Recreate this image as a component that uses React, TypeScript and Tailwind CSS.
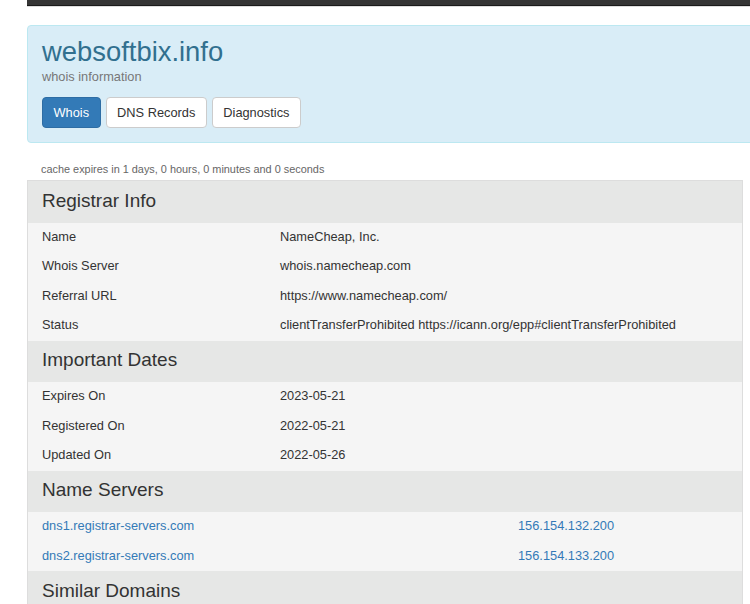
import React from "react";

type Row = { label: string; value: string };

const registrar: Row[] = [
  { label: "Name", value: "NameCheap, Inc." },
  { label: "Whois Server", value: "whois.namecheap.com" },
  { label: "Referral URL", value: "https://www.namecheap.com/" },
  {
    label: "Status",
    value: "clientTransferProhibited https://icann.org/epp#clientTransferProhibited",
  },
];

const dates: Row[] = [
  { label: "Expires On", value: "2023-05-21" },
  { label: "Registered On", value: "2022-05-21" },
  { label: "Updated On", value: "2022-05-26" },
];

const nameServers = [
  { host: "dns1.registrar-servers.com", ip: "156.154.132.200" },
  { host: "dns2.registrar-servers.com", ip: "156.154.133.200" },
];

function SectionHeader({ title }: { title: string }) {
  return (
    <div className="h-[41.5px] flex items-center px-[14px] pb-[2px] bg-[#e6e7e6] text-[19px] text-[#333]">
      {title}
    </div>
  );
}

function InfoRows({ rows }: { rows: Row[] }) {
  return (
    <div className="bg-[#f5f5f5]">
      {rows.map((r) => (
        <div key={r.label} className="grid grid-cols-3 h-[29.5px] pb-[2px] items-center text-[12.8px] text-[#333]">
          <div className="px-[14px]">{r.label}</div>
          <div className="col-span-2 px-[14px] whitespace-nowrap">{r.value}</div>
        </div>
      ))}
    </div>
  );
}

export default function App() {
  return (
    <div className="w-[750px] h-[604px] overflow-hidden bg-white pl-[27px] font-['Liberation_Sans',Arial,sans-serif]">
      {/* top bar */}
      <div className="h-[6px] bg-[#353535] border-b border-[#1a1a1a]" />
      <div className="h-px bg-[#ddd]" />

      {/* jumbotron */}
      <div className="mt-[18px] w-[740px] bg-[#d9edf7] border border-[#bce8f1] rounded-[4px] pt-[11px] pb-[14px] px-[14px]">
        <h1 className="text-[27.4px] leading-[30px] text-[#31708f]">websoftbix.info</h1>
        <p className="text-[12.8px] leading-[18px] text-[#777] mt-[1px]">whois information</p>
        <div className="flex gap-[5px] mt-[11px]">
          <button className="h-[31px] px-[10.5px] rounded-[4px] bg-[#337ab7] border border-[#2e6da4] text-white text-[12.8px]">
            Whois
          </button>
          <button className="h-[31px] px-[10.5px] rounded-[4px] bg-white border border-[#ccc] text-[#333] text-[12.8px]">
            DNS Records
          </button>
          <button className="h-[31px] px-[10.5px] rounded-[4px] bg-white border border-[#ccc] text-[#333] text-[12.8px]">
            Diagnostics
          </button>
        </div>
      </div>

      <div className="mt-[19px] pl-[14px] text-[10.9px] leading-[14px] text-[#666]">
        cache expires in 1 days, 0 hours, 0 minutes and 0 seconds
      </div>

      {/* whois table */}
      <div className="mt-[4px] w-[716px] border border-[#ddd] border-b-0">
        <SectionHeader title="Registrar Info" />
        <InfoRows rows={registrar} />
        <SectionHeader title="Important Dates" />
        <InfoRows rows={dates} />
        <SectionHeader title="Name Servers" />
        <div className="bg-[#f5f5f5]">
          {nameServers.map((ns) => (
            <div key={ns.host} className="grid grid-cols-3 h-[29.5px] pb-[2px] items-center text-[12.8px]">
              <a href="#" className="col-span-2 px-[14px] text-[#337ab7]">
                {ns.host}
              </a>
              <a href="#" className="px-[14px] text-[#337ab7]">
                {ns.ip}
              </a>
            </div>
          ))}
        </div>
        <SectionHeader title="Similar Domains" />
      </div>
    </div>
  );
}
